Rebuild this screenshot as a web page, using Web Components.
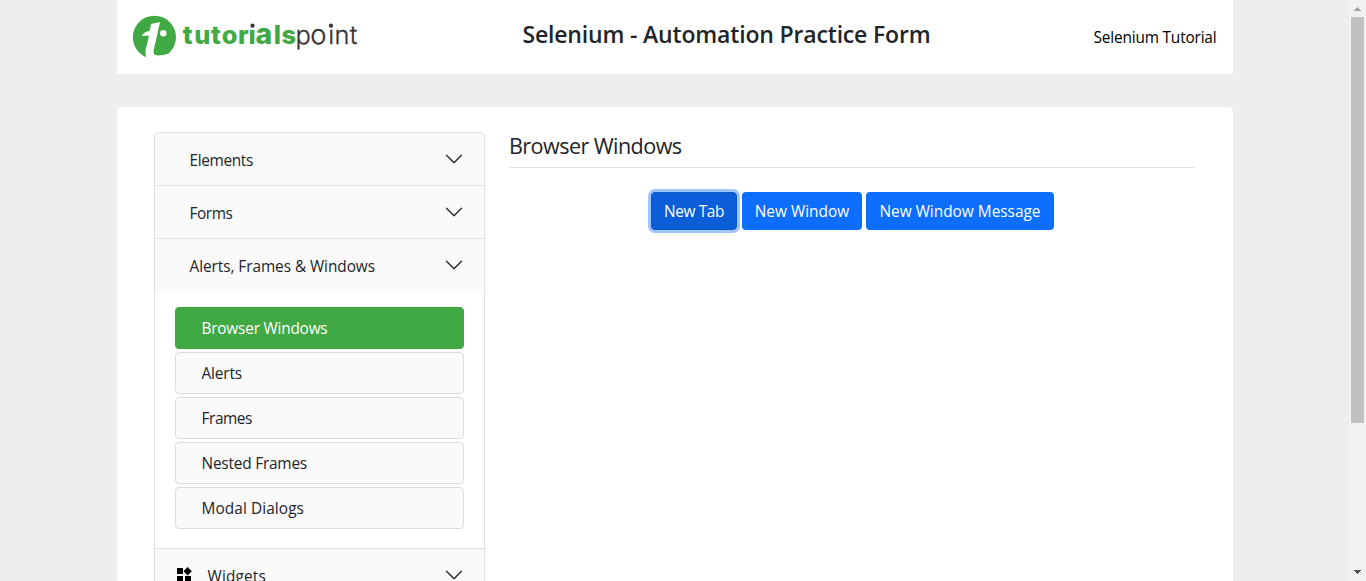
<!DOCTYPE html>
<html lang="en">
<head>
<meta charset="utf-8">
<title>Selenium - Automation Practice Form</title>
<style>
html,body{margin:0;height:100%;overflow:hidden;background:#eee}
body{font-family:"Open Sans","Noto Sans",sans-serif;font-size:15.4px;color:#212529}
</style>
</head>
<body>
<practice-page></practice-page>
<script>
const define = (name, html, ready) => customElements.define(name, class extends HTMLElement {
  connectedCallback() {
    if (this.shadowRoot) return;
    this.attachShadow({ mode: 'open' }).innerHTML = html;
    if (ready) ready(this, this.shadowRoot);
  }
});

/* Text label tracked so that its line has the width given in the "w" attribute. */
define('fit-text', `<style>:host{display:block;white-space:nowrap;line-height:24px}span{display:inline-block}</style><span><slot></slot></span>`, (el, root) => {
  const s = root.querySelector('span');
  const n = el.textContent.length;
  s.style.letterSpacing = ((+el.getAttribute('w') - s.getBoundingClientRect().width) / n) + 'px';
});

define('site-logo', `<style>:host{display:block;width:230px;height:46px}svg{display:block}text{font-family:Inter,sans-serif;font-size:25.4px}</style>
<svg width="230" height="46" viewBox="132 14 230 46">
<circle cx="154.4" cy="37.3" r="21.6" fill="#41a944"/>
<path d="M151 24 160 22 157 35.8 153.6 50.5Q152.8 55.4 158 55.4 163 55.5 168 53.7L170 60H147.2Q144.8 55 145.6 50L149 35.8H141.7Q144 31.5 149.6 31Z" fill="#fff"/>
<circle cx="163.3" cy="33.2" r="3.2" fill="#fff"/>
<text y="43.6" x="182.8 194.2 211 221.8 238 248.6 255.4 273.8 281.4" font-weight="800" fill="#41a944">tutori<tspan font-size="28.4" textLength="18">a</tspan>ls</text>
<text y="43.6" x="295.5 310.2 328.2 334.6 349.8" font-weight="300" fill="#333" stroke="#333" stroke-width=".3">p<tspan font-size="27.4">o</tspan>int</text>
<path d="M248 22H255.8V28.3H248ZM327.5 22H335V28.3H327.5Z" fill="#fff"/>
<circle cx="252.5" cy="25.7" r="2.1" fill="#333"/><circle cx="331" cy="25.7" r="2.1" fill="#333"/>
</svg>`);

define('site-header', `<style>
:host{display:flex;height:74px;background:#fff;box-sizing:border-box;padding:0 16.5px 0 15px;align-items:flex-start;justify-content:space-between}
site-logo{margin-top:14px}
.title{font-size:23px;font-weight:600;margin:22px 0 0 0}
.link{color:#000;margin-top:26px}
.mid{width:408px;margin-left:-2.5px}
</style><site-logo></site-logo><div class="mid"><fit-text class="title" w="408">Selenium - Automation Practice Form</fit-text></div><fit-text class="link" w="123">Selenium Tutorial</fit-text>`);

define('accordion-item', `<style>
:host{display:block;border-bottom:1px solid #dfdfdf}
header{height:52px;box-sizing:border-box;background:#fafafa;display:flex;align-items:center;padding:0 20px 0 34.5px}
:host([icon]) header{padding-left:22px}
.icon{display:none;margin-right:14.5px}
:host([icon]) .icon{display:block}
.label{flex:1;padding-top:4px}
svg{display:block}
</style><header><svg class="icon" width="16" height="16" viewBox="0 0 16 16"><path d="M0 1H6V7H0ZM0 9H6V15H0ZM8 9H14V15H8ZM10.6 0 14.8 4.2 10.6 8.4 6.4 4.2Z"/></svg>
<div class="label"><slot name="label"></slot></div>
<svg width="20" height="20" viewBox="0 0 16 16" fill="#212529"><path d="M1.646 4.646a.5.5 0 0 1 .708 0L8 10.293l5.646-5.647a.5.5 0 0 1 .708.708l-6 6a.5.5 0 0 1-.708 0l-6-6a.5.5 0 0 1 0-.708z"/></svg></header><slot></slot>`);

define('menu-list', `<style>:host{display:flex;flex-direction:column;gap:3px;padding:16px 20px 19px}</style><slot></slot>`);

define('menu-link', `<style>
:host{display:flex;align-items:center;height:42px;box-sizing:border-box;border:1px solid #dcdcdc;border-radius:4px;background:#fafafa;padding:1px 0 0 25.5px}
:host([active]){background:#41a944;border-color:#39a53d;color:#fff}
</style><slot></slot>`);

define('side-nav', `<style>
:host{display:block;width:331px;flex:none;box-sizing:border-box;border:1px solid #dfdfdf;border-radius:4px 4px 0 0;overflow:hidden}
</style>
<accordion-item><fit-text slot="label" w="63.5">Elements</fit-text></accordion-item>
<accordion-item><fit-text slot="label" w="43">Forms</fit-text></accordion-item>
<accordion-item><fit-text slot="label" w="185.5">Alerts, Frames &amp; Windows</fit-text>
<menu-list>
<menu-link active><fit-text w="126">Browser Windows</fit-text></menu-link>
<menu-link><fit-text w="40.5">Alerts</fit-text></menu-link>
<menu-link><fit-text w="50.5">Frames</fit-text></menu-link>
<menu-link><fit-text w="105.5">Nested Frames</fit-text></menu-link>
<menu-link><fit-text w="102.5">Modal Dialogs</fit-text></menu-link>
</menu-list></accordion-item>
<accordion-item icon><fit-text slot="label" w="58.5">Widgets</fit-text></accordion-item>`);

define('action-button', `<style>
:host{display:flex;align-items:center;justify-content:center;height:38px;box-sizing:border-box;border-radius:4px;background:#0d6efd;color:#fff;padding:2px 0 0 0}
:host([focused]){background:#0b5ed7;border:1px solid #0a58ca;box-shadow:0 0 0 3px #9fc5fe}
</style><slot></slot>`);

define('browser-windows', `<style>
:host{display:block;width:686px}
.head{height:35px;border-bottom:1px solid #dedfe0;font-size:21.6px}
.head fit-text{padding-top:2px}
.row{display:flex;margin:24px 0 0 142px}
</style><div class="head"><fit-text w="172.5">Browser Windows</fit-text></div>
<div class="row">
<action-button focused style="width:86px;margin-right:5px"><fit-text w="60">New Tab</fit-text></action-button>
<action-button style="width:120px;margin-right:4px"><fit-text w="94.5">New Window</fit-text></action-button>
<action-button style="width:188px"><fit-text w="161">New Window Message</fit-text></action-button>
</div>`);

define('scroll-bar', `<style>
:host{display:flex;flex-direction:column;width:17px;height:100%;background:#f1f1f1;align-items:center}
.thumb{width:13px;height:406px;background:#c1c1c1}
svg{display:block;height:17px;width:17px;flex:none}
i{flex:1}
</style><svg shape-rendering="crispEdges" fill="#a3a3a3"><path d="M8 7h1v1h1v1h1v1h1v1H5v-1h1V9h1V8h1Z"/></svg><div class="thumb"></div><i></i><svg shape-rendering="crispEdges" fill="#505050"><path d="M5 6h7v1h-1v1h-1v1H9v1H8V9H7V8H6V7H5Z"/></svg>`);

define('practice-page', `<style>
:host{display:flex;height:100vh;overflow:hidden}
.page{flex:1;padding:0 116px 0 117px;min-width:0}
main{display:flex;gap:24px;background:#fff;border-radius:5px;margin-top:33px;padding:25px 37px;height:600px;box-sizing:border-box;align-items:flex-start}
</style><div class="page"><site-header></site-header><main><side-nav></side-nav><browser-windows></browser-windows></main></div><scroll-bar></scroll-bar>`);
</script>
</body>
</html>
